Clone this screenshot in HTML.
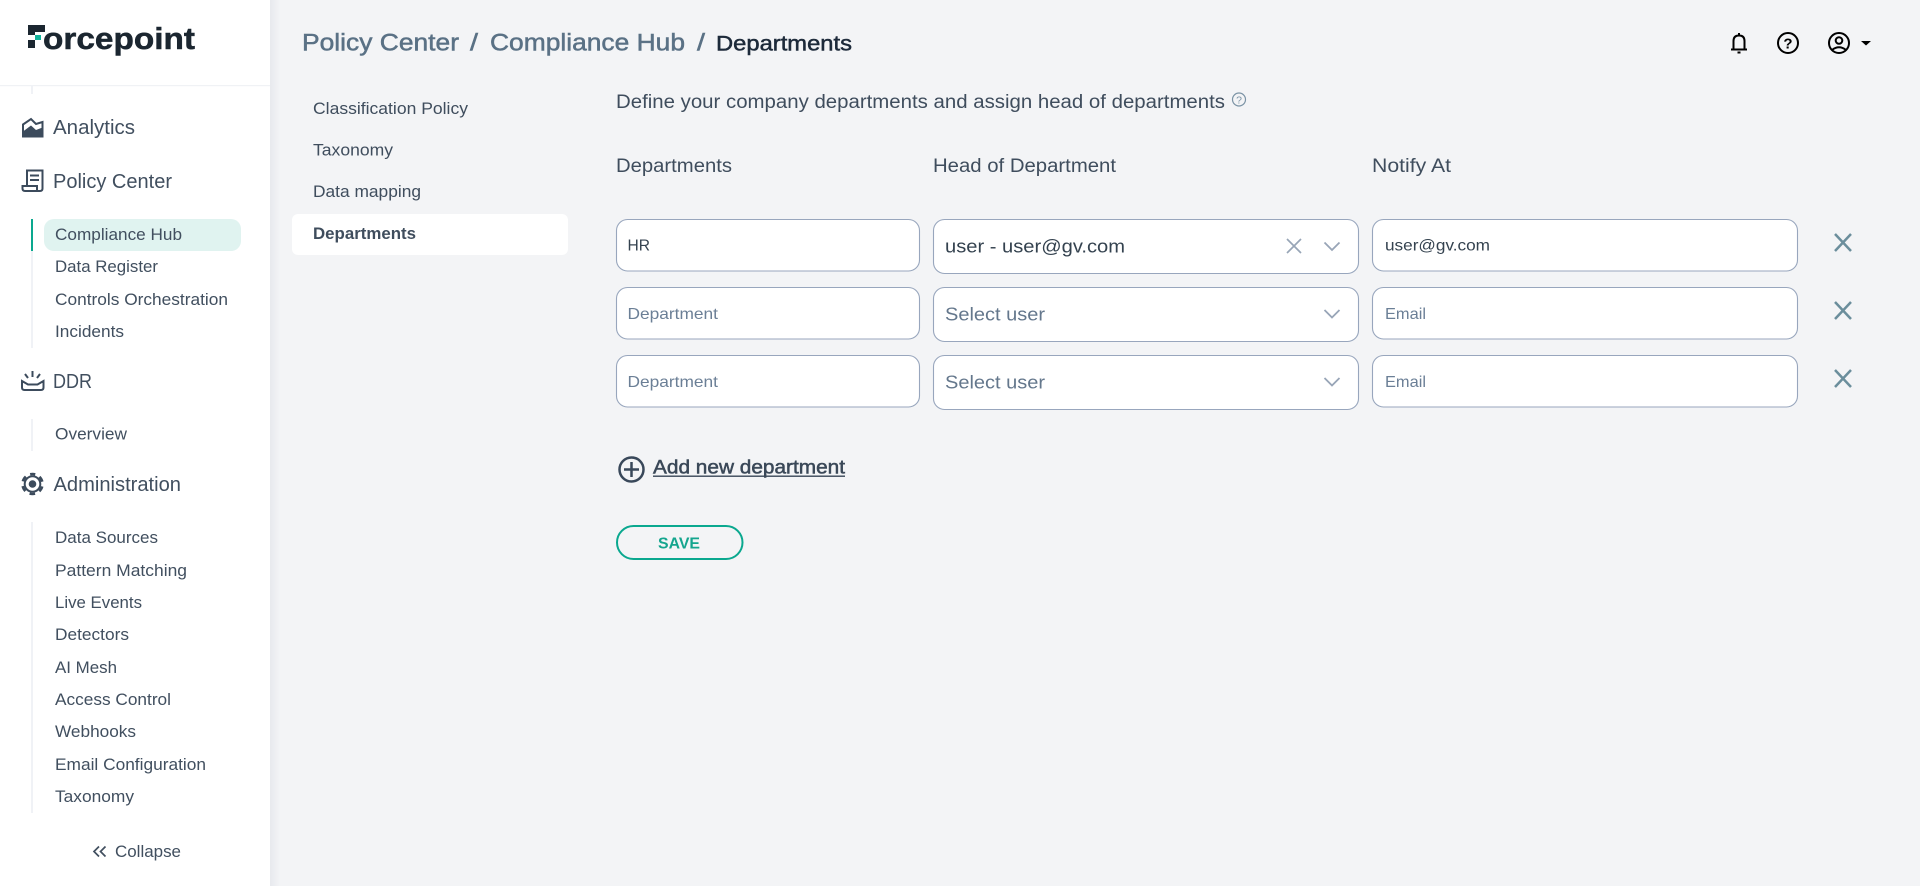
<!DOCTYPE html>
<html lang="en">
<head>
<meta charset="utf-8">
<title>Departments</title>
<style>
html,body{margin:0;padding:0;width:1920px;height:886px;overflow:hidden;background:#f3f4f6;font-family:"Liberation Sans",sans-serif}
svg{position:absolute;left:0;top:0}
text{font-family:"Liberation Sans",sans-serif}
.m{font-size:20px;fill:#414f5f}
.s{font-size:16.5px;fill:#414f5f}
.t{font-size:16.5px;fill:#3f4d5d}
.h{font-size:19px;fill:#3f4d5d}
.ph{font-size:16px;fill:#6b7f96}
.val{font-size:16px;fill:#34424f}
.sel{font-size:18.5px;fill:#64778c}
.crumb{font-size:24.5px;fill:#5a7185;stroke:#5a7185;stroke-width:.5px}
.box{fill:#fff;stroke:#98a6bd;stroke-width:1.1}
.ic{fill:none;stroke:#3c4b5c;stroke-width:2}
.top{fill:none;stroke:#000;stroke-width:2}
</style>
</head>
<body>
<svg width="1920" height="886" viewBox="0 0 1920 886" xmlns="http://www.w3.org/2000/svg">
<defs><linearGradient id="sh" x1="0" x2="1" y1="0" y2="0"><stop offset="0" stop-color="#e7e9ee"/><stop offset="1" stop-color="#f3f4f6"/></linearGradient></defs>
<rect width="1920" height="886" fill="#f3f4f6"/>
<rect x="270" width="10" height="886" fill="url(#sh)"/>
<rect width="270" height="886" fill="#fff"/>
<rect y="85" width="270" height="1.2" fill="#f0f2f5"/>

<!-- logo -->
<path d="M28 25H45V32H35V35H28Z" fill="#1b2630"/>
<rect x="28" y="40" width="7" height="8" fill="#1b2630"/>
<rect x="35" y="35" width="6" height="5" fill="#10b39b"/>
<text x="43" y="49" font-size="31" font-weight="700" fill="#1b2630" stroke="#1b2630" stroke-width=".5" textLength="152" lengthAdjust="spacingAndGlyphs">orcepoint</text>

<!-- rails -->
<rect x="31" y="85" width="2" height="9" fill="#f0f2f6"/>
<rect x="31" y="251" width="2" height="97" fill="#f0f2f6"/>
<rect x="31" y="219" width="2" height="32" fill="#0aa88f"/>
<rect x="31" y="419" width="2" height="32" fill="#f0f2f6"/>
<rect x="31" y="522" width="2" height="291" fill="#f0f2f6"/>
<rect x="44" y="219" width="197" height="32" rx="10" fill="#e0f3f0"/>

<!-- nav icons -->
<path d="M23 124.500L31 119L36 124L42.500 122V136.500H23Z" class="ic"/>
<path d="M23 137V131.500L31 125.500L36 130L42.500 127.500V137Z" fill="#3c4b5c"/>
<path d="M27 186V170.500H42.500V188.500Q42.500 191 40 191H25Q22.500 191 22.500 188.500V186H37V191M30 175.500H39M30 180H39" class="ic"/>
<path d="M32.500 371V377M25 374L28 378M40 374L37 378M22 381V387.500Q22 390 24.500 390H41Q43.500 390 43.500 387.500V381L37.500 384.500H28Z" class="ic"/>
<circle cx="32.500" cy="484" r="7.800" class="ic"/>
<circle cx="32.500" cy="484" r="10" fill="none" stroke="#3c4b5c" stroke-width="2.600" stroke-dasharray="5.600 4.870" stroke-dashoffset="2.800" transform="rotate(-90 32.500 484)"/>
<circle cx="32.500" cy="484" r="3.800" fill="#3c4b5c"/>

<!-- sidebar text -->
<text class="m" x="53" y="134" textLength="82" lengthAdjust="spacingAndGlyphs">Analytics</text>
<text class="m" x="53" y="188" textLength="119" lengthAdjust="spacingAndGlyphs">Policy Center</text>
<text class="m" x="53" y="388" textLength="39" lengthAdjust="spacingAndGlyphs">DDR</text>
<text class="m" x="53.500" y="491" textLength="127.500" lengthAdjust="spacingAndGlyphs">Administration</text>

<text class="s" x="55" y="240" textLength="127" lengthAdjust="spacingAndGlyphs">Compliance Hub</text>
<text class="s" x="55" y="272" textLength="103" lengthAdjust="spacingAndGlyphs">Data Register</text>
<text class="s" x="55" y="305" textLength="173" lengthAdjust="spacingAndGlyphs">Controls Orchestration</text>
<text class="s" x="55" y="337" textLength="69" lengthAdjust="spacingAndGlyphs">Incidents</text>
<text class="s" x="55" y="439.500" textLength="72" lengthAdjust="spacingAndGlyphs">Overview</text>
<text class="s" x="55" y="543" textLength="103" lengthAdjust="spacingAndGlyphs">Data Sources</text>
<text class="s" x="55" y="576" textLength="132" lengthAdjust="spacingAndGlyphs">Pattern Matching</text>
<text class="s" x="55" y="608" textLength="87" lengthAdjust="spacingAndGlyphs">Live Events</text>
<text class="s" x="55" y="640" textLength="74" lengthAdjust="spacingAndGlyphs">Detectors</text>
<text class="s" x="55" y="673" textLength="62" lengthAdjust="spacingAndGlyphs">AI Mesh</text>
<text class="s" x="55" y="705" textLength="116" lengthAdjust="spacingAndGlyphs">Access Control</text>
<text class="s" x="55" y="737" textLength="81" lengthAdjust="spacingAndGlyphs">Webhooks</text>
<text class="s" x="55" y="770" textLength="151" lengthAdjust="spacingAndGlyphs">Email Configuration</text>
<text class="s" x="55" y="802" textLength="79" lengthAdjust="spacingAndGlyphs">Taxonomy</text>

<path d="M99 846.500L94 851.500L99 856.500M105.500 846.500L100.500 851.500L105.500 856.500" fill="none" stroke="#414f5f" stroke-width="1.700"/>
<text class="s" x="115" y="857" textLength="66" lengthAdjust="spacingAndGlyphs">Collapse</text>

<!-- breadcrumb -->
<text class="crumb" x="302" y="50.500" textLength="157" lengthAdjust="spacingAndGlyphs">Policy Center</text>
<text class="crumb" x="470" y="50.500" textLength="8" lengthAdjust="spacingAndGlyphs">/</text>
<text class="crumb" x="490" y="50.500" textLength="195" lengthAdjust="spacingAndGlyphs">Compliance Hub</text>
<text class="crumb" x="697" y="50.500" textLength="8" lengthAdjust="spacingAndGlyphs">/</text>
<text x="716" y="50.500" font-size="21.500" fill="#1d2a3a" stroke="#1d2a3a" stroke-width=".5" textLength="136" lengthAdjust="spacingAndGlyphs">Departments</text>

<!-- top right -->
<path d="M1739 33V35.500M1733.500 49V41Q1733.500 35.500 1739 35.500Q1744.500 35.500 1744.500 41V49M1731 49.500H1747" class="top"/>
<rect x="1737.500" y="51.500" width="3" height="2" fill="#000"/>
<circle cx="1788" cy="43" r="10" class="top"/>
<text x="1788" y="48.500" font-size="15" font-weight="700" text-anchor="middle" fill="#000">?</text>
<circle cx="1839" cy="43" r="10" class="top"/>
<circle cx="1839" cy="40.500" r="3.300" class="top"/>
<path d="M1832 50Q1839 44.500 1846 50" class="top"/>
<path d="M1861 41H1871L1866 45.500Z" fill="#000"/>

<!-- sub tabs -->
<rect x="292" y="214" width="276" height="41" rx="6" fill="#fff"/>
<text class="t" x="313" y="114" textLength="155" lengthAdjust="spacingAndGlyphs">Classification Policy</text>
<text class="t" x="313" y="155.500" textLength="80" lengthAdjust="spacingAndGlyphs">Taxonomy</text>
<text class="t" x="313" y="197" textLength="108" lengthAdjust="spacingAndGlyphs">Data mapping</text>
<text class="t" x="313" y="239" font-weight="700" textLength="103" lengthAdjust="spacingAndGlyphs">Departments</text>

<!-- heading -->
<text class="h" x="616" y="108" textLength="609" lengthAdjust="spacingAndGlyphs">Define your company departments and assign head of departments</text>
<circle cx="1239" cy="99.500" r="6.500" fill="none" stroke="#7b93a5" stroke-width="1.200"/>
<text x="1239" y="103.500" font-size="10.500" text-anchor="middle" fill="#7b93a5">?</text>
<text class="h" x="616" y="172" textLength="116" lengthAdjust="spacingAndGlyphs">Departments</text>
<text class="h" x="933" y="172" textLength="183" lengthAdjust="spacingAndGlyphs">Head of Department</text>
<text class="h" x="1372" y="172" textLength="79" lengthAdjust="spacingAndGlyphs">Notify At</text>

<!-- row 1 -->
<rect class="box" x="616.500" y="219.500" width="303" height="51.500" rx="11"/>
<rect class="box" x="933.500" y="219.500" width="425" height="54" rx="11"/>
<rect class="box" x="1372.500" y="219.500" width="425" height="51.500" rx="11"/>
<text class="val" x="627.500" y="250.500" font-size="16.500" textLength="22.500" lengthAdjust="spacingAndGlyphs">HR</text>
<text x="945" y="252.500" font-size="18.500" fill="#34424f" textLength="180" lengthAdjust="spacingAndGlyphs">user - user@gv.com</text>
<text class="val" x="1385" y="250.500" textLength="105" lengthAdjust="spacingAndGlyphs">user@gv.com</text>
<path d="M1287 239L1301 253M1301 239L1287 253" fill="none" stroke="#98a5b7" stroke-width="1.700"/>
<path d="M1324.500 242.500L1332 250L1339.500 242.500" fill="none" stroke="#98a5b7" stroke-width="1.800"/>
<path d="M1835 234L1851 251M1851 234L1835 251" fill="none" stroke="#6b8e9c" stroke-width="2.500"/>

<!-- row 2 -->
<rect class="box" x="616.500" y="287.500" width="303" height="51.500" rx="11"/>
<rect class="box" x="933.500" y="287.500" width="425" height="54" rx="11"/>
<rect class="box" x="1372.500" y="287.500" width="425" height="51.500" rx="11"/>
<text class="ph" x="627.500" y="319" textLength="90.500" lengthAdjust="spacingAndGlyphs">Department</text>
<text class="sel" x="945" y="320.500" textLength="100" lengthAdjust="spacingAndGlyphs">Select user</text>
<text class="ph" x="1385" y="319" textLength="41" lengthAdjust="spacingAndGlyphs">Email</text>
<path d="M1324.500 310L1332 317.500L1339.500 310" fill="none" stroke="#98a5b7" stroke-width="1.800"/>
<path d="M1835 302L1851 319M1851 302L1835 319" fill="none" stroke="#6b8e9c" stroke-width="2.500"/>

<!-- row 3 -->
<rect class="box" x="616.500" y="355.500" width="303" height="51.500" rx="11"/>
<rect class="box" x="933.500" y="355.500" width="425" height="54" rx="11"/>
<rect class="box" x="1372.500" y="355.500" width="425" height="51.500" rx="11"/>
<text class="ph" x="627.500" y="387" textLength="90.500" lengthAdjust="spacingAndGlyphs">Department</text>
<text class="sel" x="945" y="388.500" textLength="100" lengthAdjust="spacingAndGlyphs">Select user</text>
<text class="ph" x="1385" y="387" textLength="41" lengthAdjust="spacingAndGlyphs">Email</text>
<path d="M1324.500 378L1332 385.500L1339.500 378" fill="none" stroke="#98a5b7" stroke-width="1.800"/>
<path d="M1835 370L1851 387M1851 370L1835 387" fill="none" stroke="#6b8e9c" stroke-width="2.500"/>

<!-- add -->
<circle cx="631.500" cy="469.500" r="12" fill="none" stroke="#39485a" stroke-width="2.500"/>
<path d="M624 469.500H639M631.500 462V477" fill="none" stroke="#39485a" stroke-width="2.500"/>
<text x="653" y="473.500" font-size="19" fill="#3a4858" stroke="#3a4858" stroke-width=".5" textLength="192" lengthAdjust="spacingAndGlyphs">Add new department</text>
<rect x="653" y="475.500" width="192" height="1.400" fill="#3a4858"/>

<!-- save -->
<rect x="617" y="526" width="125.500" height="33" rx="16.500" fill="none" stroke="#0aa88f" stroke-width="2"/>
<text x="658" y="548.500" font-size="16" font-weight="700" fill="#14a58e" textLength="42" lengthAdjust="spacingAndGlyphs">SAVE</text>
</svg>
</body>
</html>
